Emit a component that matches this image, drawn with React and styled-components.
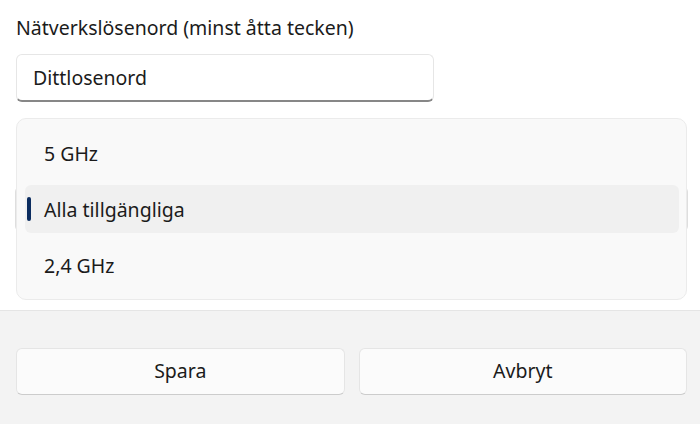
import React from 'react'
import styled, { createGlobalStyle } from 'styled-components'

const GlobalStyle = createGlobalStyle`
  html, body {
    margin: 0;
    padding: 0;
    background: #ffffff;
  }
  body {
    font-family: "Noto Sans", "Open Sans", sans-serif;
    color: #1b1b1b;
  }
`

const Page = styled.div`
  width: 700px;
  height: 424px;
  display: flex;
  flex-direction: column;
  overflow: hidden;
`

const Content = styled.div`
  position: relative;
  flex: 0 0 310px;
  background: #ffffff;
  padding: 14px 13px 0 16px;
  box-sizing: border-box;
`

const Label = styled.div`
  font-size: 19.5px;
  line-height: 28px;
  height: 28px;
  margin-bottom: 12px;
`

const TextBox = styled.div`
  width: 418px;
  height: 48px;
  box-sizing: border-box;
  border: 1px solid #e6e6e6;
  border-bottom: 2px solid #878787;
  border-radius: 6px;
  background: #ffffff;
  display: flex;
  align-items: center;
  padding: 0 0 1px 16px;
  font-size: 19.5px;
`

const ComboBox = styled.div`
  margin-top: 84px;
  margin-left: -1px;
  width: 673px;
  height: 46px;
  box-sizing: border-box;
  border: 1px solid #dedede;
  border-radius: 6px;
  background: #fbfbfb;
`

const Popup = styled.div`
  position: absolute;
  left: 16px;
  top: 118px;
  width: 671px;
  height: 182px;
  box-sizing: border-box;
  border: 1px solid #ebebeb;
  border-radius: 10px;
  background: #f9f9f9;
  padding: 10px 7px 10px 8px;
  display: flex;
  flex-direction: column;
  gap: 8px;
`

const Item = styled.div`
  position: relative;
  height: 48px;
  border-radius: 6px;
  background: ${p => (p.$selected ? '#f0f0f0' : 'transparent')};
  display: flex;
  align-items: center;
  padding-left: 19px;
  font-size: 19.5px;
`

const Indicator = styled.span`
  position: absolute;
  left: 2px;
  top: 12px;
  width: 4px;
  height: 24px;
  border-radius: 2px;
  background: #0b2c5f;
`

const Footer = styled.div`
  flex: 1;
  background: #f3f3f3;
  border-top: 1px solid #e5e5e5;
  display: flex;
  gap: 14px;
  padding: 37px 13px 0 16px;
`

const Button = styled.button`
  flex: 1;
  height: 47px;
  box-sizing: border-box;
  border: 1px solid #e5e5e5;
  border-bottom: 1px solid #cccccc;
  border-radius: 6px;
  background: #fbfbfb;
  font-family: inherit;
  font-size: 19.5px;
  color: #1b1b1b;
  padding: 0 0 2px;
`

const options = [
  { label: '5 GHz' },
  { label: 'Alla tillgängliga', selected: true },
  { label: '2,4 GHz' },
]

export default function App() {
  return (
    <>
      <GlobalStyle />
      <Page>
        <Content>
          <Label>Nätverkslösenord (minst åtta tecken)</Label>
          <TextBox>Dittlosenord</TextBox>
          <ComboBox />
          <Popup>
            {options.map(o => (
              <Item key={o.label} $selected={o.selected}>
                {o.selected && <Indicator />}
                {o.label}
              </Item>
            ))}
          </Popup>
        </Content>
        <Footer>
          <Button>Spara</Button>
          <Button>Avbryt</Button>
        </Footer>
      </Page>
    </>
  )
}
